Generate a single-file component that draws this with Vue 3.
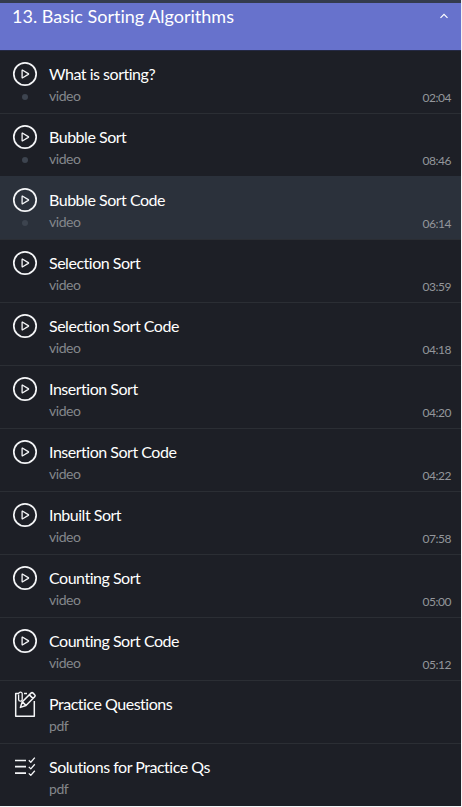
<script setup>
const lessons = [
  { title: 'What is sorting?', kind: 'video', time: '02:04', dot: true },
  { title: 'Bubble Sort', kind: 'video', time: '08:46', dot: true },
  { title: 'Bubble Sort Code', kind: 'video', time: '06:14', dot: true, active: true },
  { title: 'Selection Sort', kind: 'video', time: '03:59' },
  { title: 'Selection Sort Code', kind: 'video', time: '04:18' },
  { title: 'Insertion Sort', kind: 'video', time: '04:20' },
  { title: 'Insertion Sort Code', kind: 'video', time: '04:22' },
  { title: 'Inbuilt Sort', kind: 'video', time: '07:58' },
  { title: 'Counting Sort', kind: 'video', time: '05:00' },
  { title: 'Counting Sort Code', kind: 'video', time: '05:12' },
  { title: 'Practice Questions', kind: 'pdf', icon: 'note' },
  { title: 'Solutions for Practice Qs', kind: 'pdf', icon: 'list' },
]
</script>

<template>
  <main class="panel">
    <header class="head">
      <h1>13. Basic Sorting Algorithms</h1>
      <svg class="chevron" width="10" height="8" viewBox="0 0 10 8"><path d="M1.5 5.8 5 2.3l3.5 3.5" /></svg>
    </header>
    <ul class="list">
      <li v-for="l in lessons" :key="l.title" class="row" :class="{ active: l.active }">
        <div class="side">
          <svg v-if="l.icon === 'note'" class="icon note" width="26" height="28" viewBox="0 0 26 28">
            <path d="M7 2.6H3.7v22.6h18.6V10M12 2.6h3" />
            <path class="thin" d="M6.6 3.4v5a1.8 1.8 0 0 0 3.6 0V2.8a1.7 1.7 0 0 0-3.4 0" />
            <path d="M8.4 16.4 10.3 10.8 19 2.1a1.5 1.5 0 0 1 2.1 0l1.6 1.6a1.5 1.5 0 0 1 0 2.1L14 14.5zM17.4 3.9l3.5 3.5M10.3 10.8l3.6 3.6" />
          </svg>
          <svg v-else-if="l.icon === 'list'" class="icon" width="26" height="28" viewBox="0 0 26 28">
            <path d="M3 6.5h11M3 12.7h11M3 19.2h11" />
            <path class="thin" d="m16.8 6.2 2 2 4-4.6M16.8 12.9l2 2 4-4.6M16.8 19.4l2 2 4-4.6" />
          </svg>
          <svg v-else class="icon" width="26" height="28" viewBox="0 0 26 28">
            <circle cx="13" cy="13" r="11.2" />
            <path class="thin" d="M10.1 9.6v6.8q0 .7.6.4l5.6-3.4q.6-.4 0-.8l-5.6-3.4q-.6-.3-.6.4z" />
          </svg>
          <span v-if="l.dot" class="dot"></span>
        </div>
        <div class="text">
          <div class="title">{{ l.title }}</div>
          <div class="kind">{{ l.kind }}</div>
        </div>
        <time v-if="l.time" class="time">{{ l.time }}</time>
      </li>
    </ul>
  </main>
</template>

<style>
body { background: #f4f4f6; }
</style>

<style scoped>
.panel {
  box-sizing: border-box;
  width: 461px;
  height: 806px;
  overflow: hidden;
  border-top: 3px solid #343b4d;
  background: #1d1f26;
  font-family: Lato, "Liberation Sans", sans-serif;
  font-variant-ligatures: none;
  color: #fff;
}
.head {
  display: flex;
  justify-content: space-between;
  box-sizing: border-box;
  height: 47px;
  padding: 1px 12px 0;
  background: #6772cc;
}
h1 { margin: 0; font-size: 18px; line-height: 24px; font-weight: 400; white-space: nowrap; }
.chevron { margin-top: 8px; fill: none; stroke: #fff; stroke-width: 1.2; }
.list { margin: 0; padding: 0; list-style: none; }
.row {
  display: flex;
  box-sizing: border-box;
  height: 63px;
  padding: 11px 10px 0 12px;
  border-top: 1px solid #2b2e34;
}
.row:first-child { border-top-color: #242944; }
.row.active { background: #2b313b; border-top-color: #2b313b; }
.side { display: flex; flex-direction: column; align-items: center; width: 26px; margin-right: 11px; margin-top: -1px; }
.icon { flex: none; fill: none; stroke: #f4f5f7; stroke-width: 1.7; stroke-linejoin: round; }
.note { stroke-width: 1.5; }
.thin { stroke-width: 1.3; }
.dot { width: 6px; height: 6px; margin-top: 5px; border-radius: 50%; background: #3d444f; }
.text { flex: 1; }
.title { font-size: 16px; line-height: 24px; letter-spacing: -0.48px; white-space: nowrap; }
.kind { font-size: 14px; line-height: 20px; letter-spacing: -0.45px; color: #84878b; }
.time { align-self: flex-start; margin-top: 27px; font-size: 12px; line-height: 18px; letter-spacing: -0.45px; color: #93969b; }
</style>
